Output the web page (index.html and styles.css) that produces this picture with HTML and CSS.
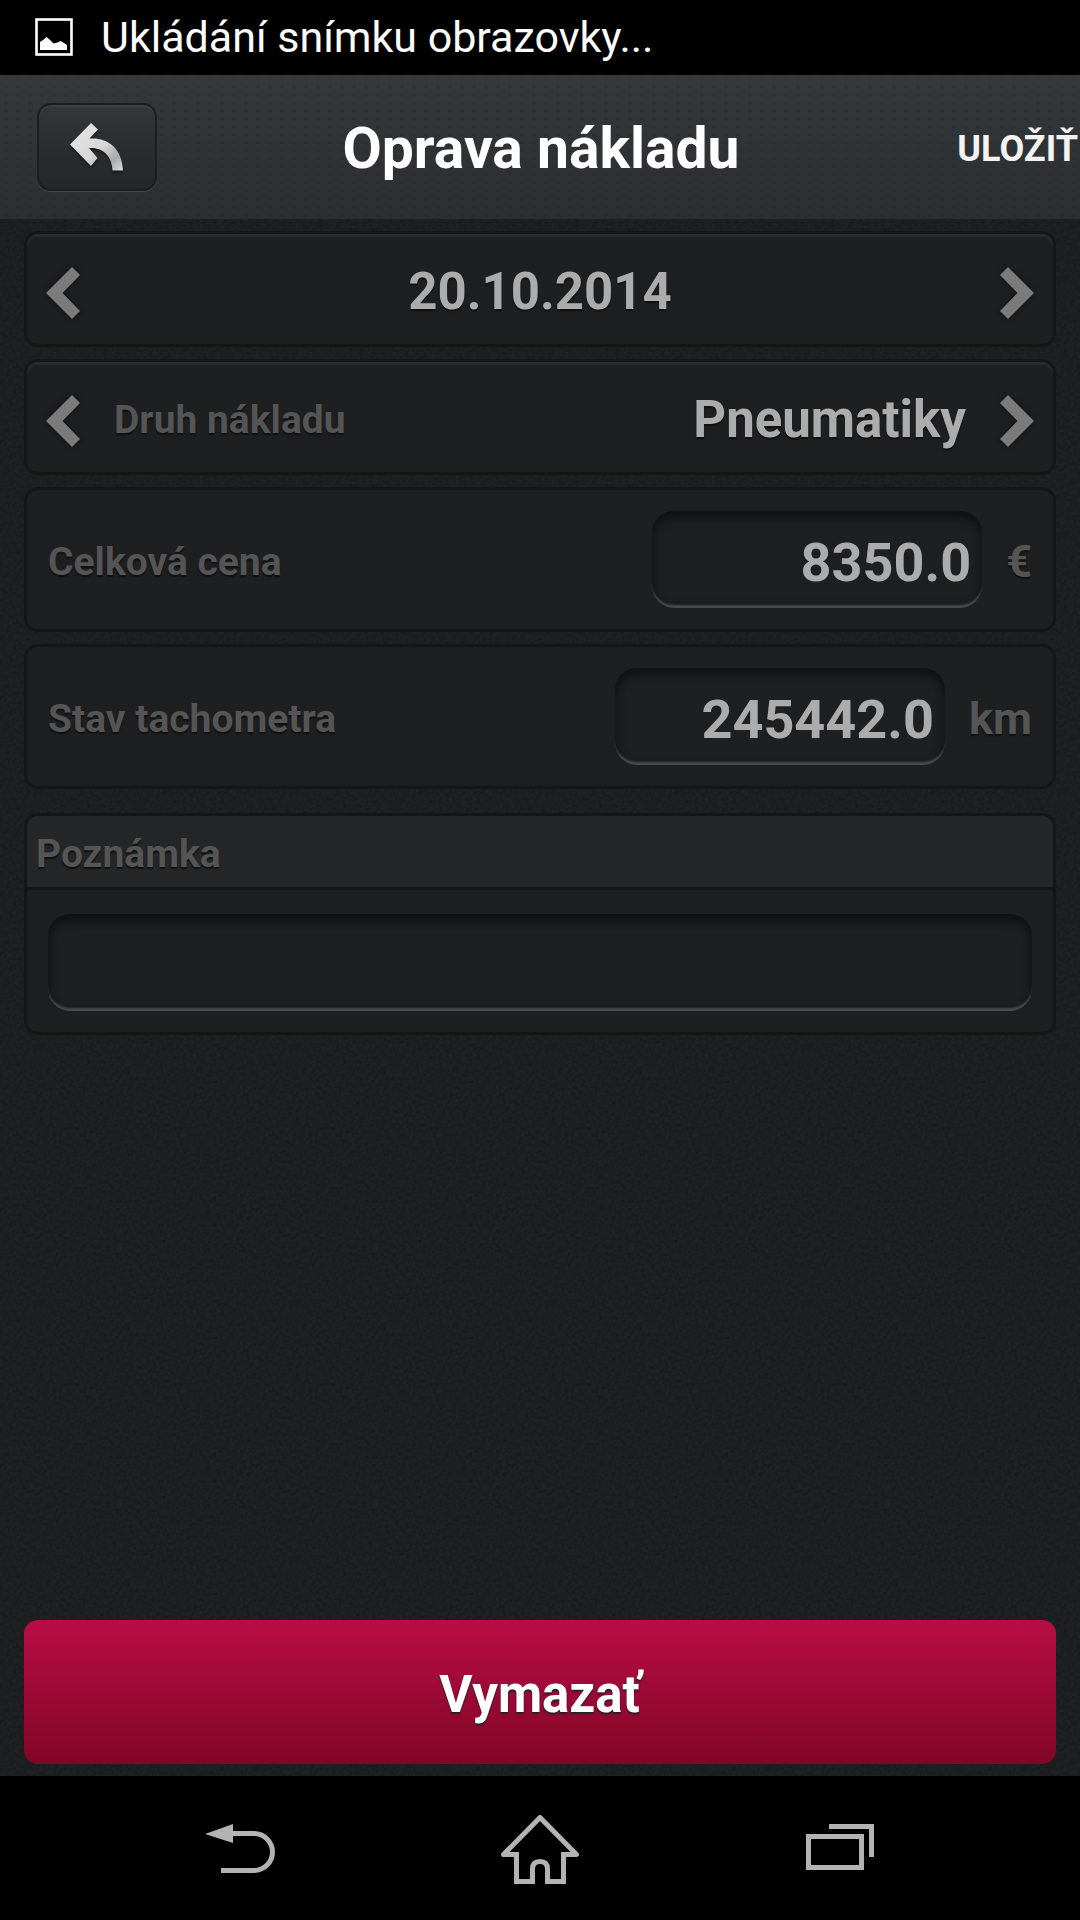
FILE: index.html
```html
<!DOCTYPE html>
<html lang="sk">
<head>
<meta charset="utf-8">
<meta name="viewport" content="width=device-width, initial-scale=1">
<title>Oprava nákladu</title>
<link rel="stylesheet" href="styles.css">
</head>
<body>
<div class="status-bar">
  <svg class="status-icon" viewBox="0 0 38 38" aria-hidden="true">
    <rect x="1.500" y="1.500" width="35" height="35" fill="none" stroke="#fff" stroke-width="2.600"/>
    <path fill="#fff" d="M5 32V24l3-2 3.500-3 3 2.500 4 4 4-1 3-1.500 3.500 2 3 2V32z"/>
  </svg>
  <span>Ukládání snímku obrazovky...</span>
</div>

<header class="title-bar">
  <button class="back-button" type="button" aria-label="Späť">
    <svg viewBox="0 0 54 52" aria-hidden="true">
      <defs>
        <linearGradient id="metal" x1="0" y1="0" x2="1" y2="1">
          <stop offset="0" stop-color="#e6e6e6"/>
          <stop offset="0.550" stop-color="#d8d8d8"/>
          <stop offset="0.800" stop-color="#a8a8a8"/>
          <stop offset="1" stop-color="#dedede"/>
        </linearGradient>
      </defs>
      <path fill="url(#metal)" d="M0 21.500 21 0l7 6.500-8.500 9C38 14.500 52 25 53 47.500H42.500C42 33 33 24 19 25l8.500 10-6.500 8z"/>
    </svg>
  </button>
  <h1>Oprava nákladu</h1>
  <button class="save-button" type="button">ULOŽIŤ</button>
</header>

<main class="screen">
  <form class="form">
    <div class="card stepper">
      <button class="arrow" type="button" aria-label="Predchádzajúci deň">
        <svg viewBox="0 0 34 52" aria-hidden="true"><path d="M26 0 34 8 16.500 26 34 44 26 52 0 26z"/></svg>
      </button>
      <output class="value date">20.10.2014</output>
      <button class="arrow" type="button" aria-label="Nasledujúci deň">
        <svg viewBox="0 0 34 52" aria-hidden="true"><path d="M8 0 0 8 17.500 26 0 44 8 52 34 26z"/></svg>
      </button>
    </div>

    <div class="card stepper">
      <button class="arrow" type="button" aria-label="Predchádzajúci druh">
        <svg viewBox="0 0 34 52" aria-hidden="true"><path d="M26 0 34 8 16.500 26 34 44 26 52 0 26z"/></svg>
      </button>
      <label class="label" for="kind">Druh nákladu</label>
      <output class="value kind" id="kind">Pneumatiky</output>
      <button class="arrow" type="button" aria-label="Nasledujúci druh">
        <svg viewBox="0 0 34 52" aria-hidden="true"><path d="M8 0 0 8 17.500 26 0 44 8 52 34 26z"/></svg>
      </button>
    </div>

    <div class="card field">
      <label class="label" for="price">Celková cena</label>
      <input class="box" id="price" type="text" inputmode="decimal" value="8350.0">
      <span class="unit">€</span>
    </div>

    <div class="card field">
      <label class="label" for="odometer">Stav tachometra</label>
      <input class="box" id="odometer" type="text" inputmode="decimal" value="245442.0">
      <span class="unit">km</span>
    </div>

    <div class="card note">
      <label class="label note-title" for="note">Poznámka</label>
      <div class="note-body">
        <input class="box" id="note" type="text">
      </div>
    </div>
  </form>

  <button class="delete-button" type="button">Vymazať</button>
</main>

<nav class="nav-bar">
  <button type="button" aria-label="Naspäť">
    <svg width="70" height="70" viewBox="0 0 70 70" fill="none" stroke="#b3b3b3" stroke-width="5" aria-hidden="true">
      <path d="M26 18.500h23a18.500 18.500 0 0 1 0 37H16"/>
      <path d="M0 19 28 9V28z" fill="#b3b3b3" stroke="none"/>
    </svg>
  </button>
  <button type="button" aria-label="Domov">
    <svg width="80" height="70" viewBox="0 0 80 70" fill="none" stroke="#b3b3b3" stroke-width="5" stroke-linejoin="round" aria-hidden="true">
      <path stroke-linejoin="miter" d="M32.500 54V66.500H16.500V39.500"/>
      <path stroke-linejoin="miter" d="M47.500 54V66.500H63.500V39.500"/>
      <path d="M32.500 56V54q0-7.500 7.500-7.500T47.500 54v2M19 39.500H3.500L40 2.500l36.500 37H61"/>
    </svg>
  </button>
  <button type="button" aria-label="Nedávne aplikácie">
    <svg width="70" height="70" viewBox="0 0 70 70" fill="none" stroke="#b3b3b3" stroke-width="5" aria-hidden="true">
      <rect x="3.500" y="21.500" width="53" height="31"/>
      <path d="M24 11.500H66.500V42"/>
    </svg>
  </button>
</nav>
</body>
</html>
```

FILE: styles.css
```css
* {
  box-sizing: border-box;
}

body {
  margin: 0;
  min-height: 100vh;
  display: flex;
  flex-direction: column;
  background: #000;
  color: #fff;
  font-family: Roboto, "Noto Sans", sans-serif;
}

button {
  margin: 0;
  padding: 0;
  border: 0;
  background: none;
  color: inherit;
  font: inherit;
  cursor: pointer;
}

svg {
  display: block;
}

/* System status bar */
.status-bar {
  display: flex;
  align-items: center;
  gap: 28px;
  height: 75px;
  padding: 0 35px 2px;
  font-size: 43px;
  line-height: 48px;
}

.status-icon {
  width: 38px;
  height: 38px;
}

/* Title bar */
.title-bar {
  display: grid;
  grid-template-columns: 1fr auto 1fr;
  align-items: center;
  height: 144px;
  padding: 0 2px 0 37px;
  background:
    radial-gradient(circle, rgba(20, 24, 28, 0.12) 1px, transparent 3px) 0 0 / 12px 8px,
    linear-gradient(#38383a, #33373a 16%, #303336 50%, #2d2e31);
}

.title-bar h1 {
  margin: 0;
  padding: 4px 33px 0 0;
  font-size: 57px;
  line-height: 68px;
  font-weight: 700;
}

.back-button {
  display: flex;
  align-items: center;
  justify-content: center;
  width: 120px;
  height: 88px;
  border: 2px solid #1b1d1e;
  border-radius: 14px;
  background: linear-gradient(#34383a, #2b2f31 40%, #242728);
  box-shadow: inset 0 2px 1px #3d4143, 0 1px 1px #4a4a4a;
}

.back-button svg {
  width: 54px;
  height: 52px;
  margin-top: 3px;
  filter: drop-shadow(0 2px 1px #161616);
}

.save-button {
  justify-self: end;
  padding-top: 4px;
  color: #f3f3f3;
  font-size: 36px;
  line-height: 42px;
  font-weight: 700;
}

/* Application screen with a grainy dark surface */
.screen {
  flex: 1;
  display: flex;
  flex-direction: column;
  justify-content: space-between;
  gap: 24px;
  padding: 12px 24px;
  background: #1f2123 url("data:image/svg+xml,%3Csvg xmlns='http://www.w3.org/2000/svg' width='256' height='256'%3E%3Cfilter id='n'%3E%3CfeTurbulence type='fractalNoise' baseFrequency='0.3' numOctaves='3' stitchTiles='stitch'/%3E%3CfeColorMatrix values='0 0 0 0 0 0 0 0 0 0 0 0 0 0 0 0.4 0 0 0 -0.12'/%3E%3C/filter%3E%3Crect width='256' height='256' filter='url(%23n)'/%3E%3C/svg%3E");
}

.form {
  display: flex;
  flex-direction: column;
  gap: 12px;
}

.card {
  border: 3px solid #151717;
  border-radius: 14px;
  background: #1e1f21;
}

.label,
.unit {
  color: #555;
  font-weight: 700;
  text-shadow: 0 2px 1px #111;
}

.label {
  font-size: 39px;
  line-height: 46px;
}

.value {
  color: #acacac;
  font-size: 51px;
  line-height: 60px;
  font-weight: 700;
  text-shadow: 0 2px 1px #111;
}

/* Rows stepped with a pair of arrows */
.stepper {
  display: flex;
  align-items: center;
  height: 116px;
  padding: 6px 19px 0;
  box-shadow: inset 0 3px 1px #2b2c2e;
}

.arrow {
  flex: none;
}

.arrow svg {
  width: 34px;
  height: 52px;
  margin-top: 2px;
  fill: #7b7b7b;
  filter: drop-shadow(0 0 2px #111);
}

.date {
  flex: 1;
  text-align: center;
}

.stepper .label {
  padding-left: 34px;
}

.kind {
  flex: 1;
  padding-right: 34px;
  text-align: right;
}

/* Rows with a text box */
.field {
  display: flex;
  align-items: center;
  gap: 24px;
  height: 145px;
  padding: 0 21px;
}

.field .label {
  flex: 1;
  padding-top: 4px;
}

.box {
  width: 330px;
  height: 97px;
  padding: 6px 11px 0;
  border: 0;
  border-radius: 22px;
  outline: 0;
  background: #1e1f21;
  box-shadow:
    inset 0 -4px 2px -1px #4a4a4c,
    inset 0 10px 8px -3px #111313,
    inset 0 0 7px 2px #151717;
  color: #acacac;
  font: 700 54px/64px Roboto, "Noto Sans", sans-serif;
  text-align: right;
}

.unit {
  padding-top: 4px;
  font-size: 45px;
  line-height: 54px;
}

/* Note */
.note {
  margin-top: 12px;
}

.note-title {
  display: block;
  padding: 15px 9px 10px;
  border-bottom: 3px solid #151717;
  border-radius: 11px 11px 0 0;
  background: #252628;
}

.note-body {
  padding: 24px 21px 21px;
}

.note-body .box {
  display: block;
  width: 100%;
  text-align: left;
}

.delete-button {
  height: 144px;
  padding-top: 6px;
  border-radius: 14px;
  background: linear-gradient(#b80d46, #a50a3b 35%, #820626);
  font-size: 51px;
  line-height: 60px;
  font-weight: 700;
  text-shadow: 0 2px 2px #222;
}

/* System navigation bar */
.nav-bar {
  display: grid;
  grid-template-columns: repeat(3, 300px);
  justify-content: center;
  align-items: center;
  height: 144px;
  padding-top: 4px;
}

.nav-bar button {
  display: flex;
  justify-content: center;
}
```
